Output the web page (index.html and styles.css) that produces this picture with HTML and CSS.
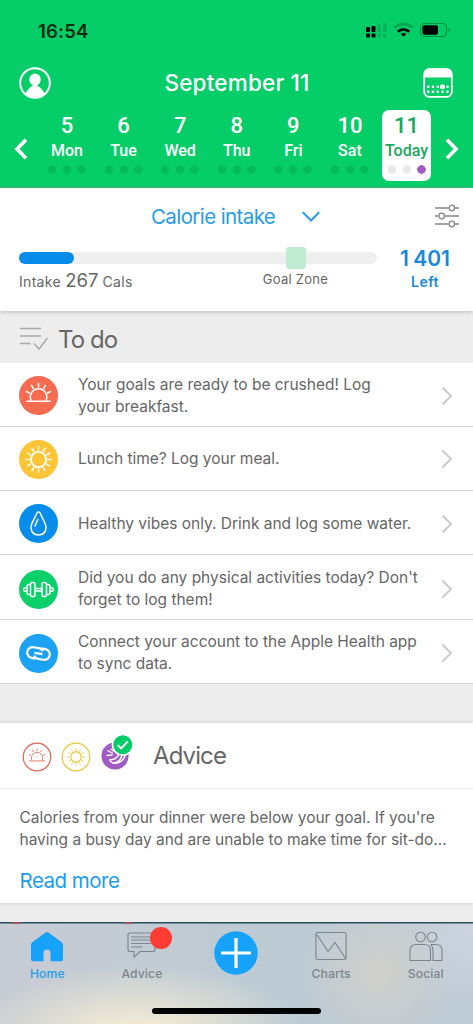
FILE: index.html
```html
<!DOCTYPE html>
<html lang="en">
<head>
<meta charset="utf-8">
<meta name="viewport" content="width=device-width">
<title>Calorie tracker</title>
<link rel="stylesheet" href="styles.css">
</head>
<body>
<svg class="defs" width="0" height="0">
  <defs>
    <symbol id="sunrise" viewBox="0 0 39 39">
      <path d="M8 25.200h23.300M12.400 25a8.200 8.200 0 1 1 14.300 0M19.500 7.300v3.700M12.600 9.300l1.600 3M26.400 9.300l-1.600 3M7.500 15.500l3 1.700M31.500 15.500l-3 1.700"/>
    </symbol>
    <symbol id="sun" viewBox="0 0 39 39">
      <circle cx="19.500" cy="19.500" r="7.600" stroke-width="1.900"/>
      <path d="M19.500 6.800v3.300M19.500 28.900v3.300M6.800 19.500h3.300M28.900 19.500h3.300M13.100 8.500l1.700 2.900M24.200 27.600l1.700 2.900M8.500 13.100l2.900 1.700M27.600 24.200l2.900 1.700M8.500 25.900l2.900-1.700M27.600 14.800l2.900-1.700M13.100 30.500l1.700-2.900M24.200 11.400l1.700-2.900"/>
    </symbol>
    <symbol id="chevron" viewBox="0 0 12 20"><path d="M1.500 1.500L10 10l-8.500 8.500"/></symbol>
  </defs>
</svg>
<div class="screen">
  <header class="header">
    <div class="status">
      <span class="time">16:54</span>
      <svg width="86" height="18" viewBox="0 0 86 18">
        <g fill="#000"><rect x="1" y="5" width="4" height="5" rx="1"/><rect x="6.500" y="4" width="4" height="6" rx="1"/><rect x="1" y="11.500" width="4" height="4" rx="1"/><rect x="6.500" y="11.500" width="4" height="4" rx="1"/></g>
        <g fill="#03b35a"><rect x="12.200" y="2.500" width="3.500" height="7.500" rx="1"/><rect x="18" y="1" width="3.500" height="9" rx="1"/><rect x="12.200" y="11.500" width="3.500" height="4" rx="1"/><rect x="18" y="11.500" width="3.500" height="4" rx="1"/></g>
        <path d="M29.500 5.500q9-7 18 0" fill="none" stroke="#03a552" stroke-width="3"/>
        <path d="M32.800 9.600q5.700-4.500 11.400 0" fill="none" stroke="#000" stroke-width="2.800"/>
        <path d="M38.500 14.800l-2.800-2.800q2.800-2.200 5.600 0z"/>
        <rect x="55.500" y="1.500" width="26" height="13" rx="4" fill="none" stroke="#02903f" stroke-width="1.200"/>
        <rect x="57.500" y="3.200" width="15.500" height="9.600" rx="2"/>
        <path d="M83.500 6v4q1.300-.6 1.300-2t-1.300-2z" fill="#02903f"/>
      </svg>
    </div>
    <div class="title-row">
      <svg width="32" height="32" viewBox="0 0 32 32"><circle cx="16" cy="16" r="14.800" fill="none" stroke="#fff" stroke-width="2"/><path fill="#fff" d="M6 27q3.500-6.500 8-8.600-3.700-2-3.700-6.200a5.700 5.700 0 0 1 11.400 0q0 4.200-3.700 6.200 4.500 2.100 8 8.600-10 7.500-20 0z"/></svg>
      <h1>September 11</h1>
      <svg width="30" height="30" viewBox="0 0 30 30"><rect x="1.200" y="1.200" width="27.600" height="27.600" rx="5" fill="none" stroke="#fff" stroke-width="1.700"/><path d="M1 9.500V6q0-5.500 5.500-5.500h17Q29 .5 29 6v3.500z" fill="#fff"/><g fill="#fff"><circle cx="5.300" cy="18.700" r="1.300"/><circle cx="10" cy="18.700" r="1.300"/><circle cx="14.800" cy="18.700" r="1.300"/><circle cx="19.500" cy="18.700" r="2.500"/><circle cx="24.500" cy="18.700" r="1.300"/><circle cx="5.300" cy="23.800" r="1.300"/><circle cx="10" cy="23.800" r="1.300"/><circle cx="14.800" cy="23.800" r="1.300"/><circle cx="19.500" cy="23.800" r="1.300"/><circle cx="24.500" cy="23.800" r="1.300"/></g></svg>
    </div>
    <nav class="week">
      <svg class="arrow" width="14" height="22" viewBox="0 0 14 22"><path d="M12 1.800L3 11l9 9.200"/></svg>
      <div class="days">
        <div class="day"><b>5</b><span>Mon</span><i></i></div>
        <div class="day"><b>6</b><span>Tue</span><i></i></div>
        <div class="day"><b>7</b><span>Wed</span><i></i></div>
        <div class="day"><b>8</b><span>Thu</span><i></i></div>
        <div class="day"><b>9</b><span>Fri</span><i></i></div>
        <div class="day"><b>10</b><span>Sat</span><i></i></div>
        <div class="day today"><b>11</b><span>Today</span><i></i></div>
      </div>
      <svg class="arrow" width="14" height="22" viewBox="0 0 14 22"><path d="M2 1.800L11 11l-9 9.200"/></svg>
    </nav>
  </header>

  <section class="intake">
    <div class="intake-head">
      <h2>Calorie intake</h2>
      <svg class="down" width="18" height="11" viewBox="0 0 18 11"><path d="M.8 1.200L9 9.500l8.200-8.300"/></svg>
      <svg class="filter" width="24" height="24" viewBox="0 0 24 24"><path d="M0 4h13.500M20 4h4M0 12h3.500M10 12h14M0 20h13.500M20 20h4"/><circle cx="16.800" cy="4" r="2.800"/><circle cx="6.700" cy="12" r="2.800"/><circle cx="16.800" cy="20" r="2.800"/></svg>
    </div>
    <div class="intake-body">
      <div class="meter">
        <div class="bar"><div class="fill"></div><div class="zone"></div></div>
        <div class="labels"><p class="amount">Intake <strong>267</strong> Cals</p><p class="goal">Goal Zone</p></div>
      </div>
      <div class="left"><b>1 401</b><span>Left</span></div>
    </div>
  </section>

  <div class="todo-head">
    <svg width="29" height="24" viewBox="0 0 29 24"><path d="M0 1.500h21M0 9h21M0 16.500h10.500M14 16.500l5 5.500 8.500-11"/></svg>
    <h2>To do</h2>
  </div>
  <ul class="todo">
    <li><span class="disc coral"><svg><use href="#sunrise"/></svg></span><p>Your goals are ready to be crushed! Log<br>your breakfast.</p><svg class="go"><use href="#chevron"/></svg></li>
    <li><span class="disc yellow"><svg><use href="#sun"/></svg></span><p>Lunch time? Log your meal.</p><svg class="go"><use href="#chevron"/></svg></li>
    <li><span class="disc blue"><svg viewBox="0 0 39 39"><path d="M19.500 8q-1.500 0-2.500 3-1.700 3.500-3.500 7.200-1.800 3.800-1.500 6 .8 6.800 7.500 6.800t7.500-6.800q.3-2.200-1.500-6-1.800-3.700-3.500-7.200-1-3-2.500-3zM18.700 15.500l-2.700 6.500"/></svg></span><p>Healthy vibes only. Drink and log some water.</p><svg class="go"><use href="#chevron"/></svg></li>
    <li class="tall"><span class="disc green"><svg viewBox="0 0 39 39"><path d="M16.500 18.500h6M16.500 21h6"/><rect x="11.500" y="12.500" width="4.500" height="14" rx="1.500"/><rect x="23" y="12.500" width="4.500" height="14" rx="1.500"/><path d="M11.500 14.500h-1.500q-2 0-2 2v6q0 2 2 2h1.500M27.500 14.500H29q2 0 2 2v6q0 2-2 2h-1.500M8 17.700H6q-1.300 0-1.300 1.800T6 21.300h2M31 17.700h2q1.300 0 1.300 1.800T33 21.300h-2"/></svg></span><p>Did you do any physical activities today? Don't<br>forget to log them!</p><svg class="go"><use href="#chevron"/></svg></li>
    <li class="low"><span class="disc sky"><svg class="link" viewBox="0 0 39 39"><g transform="rotate(10 19.500 19.500)"><path d="M17.500 25h-4a5.400 5.400 0 0 1 0-10.800h5.500q3.300 0 4.200 2.500M21.500 14h4a5.400 5.400 0 0 1 0 10.800h-5.500q-3.300 0-4.200-2.500M15.500 19.500h8"/></g></svg></span><p>Connect your account to the Apple Health app<br>to sync data.</p><svg class="go"><use href="#chevron"/></svg></li>
  </ul>

  <section class="advice">
    <div class="advice-head">
      <svg class="meal red" viewBox="0 0 30 30"><circle cx="15" cy="15" r="13.800"/><use href="#sunrise" x="1.500" y="1.500" width="27" height="27"/></svg>
      <svg class="meal gold" viewBox="0 0 30 30"><circle cx="15" cy="15" r="13.800"/><use href="#sun" x="1.500" y="1.500" width="27" height="27"/></svg>
      <svg class="dinner" width="34" height="38" viewBox="0 0 34 38"><circle cx="15" cy="22" r="13.600" fill="#a25ac4"/><g fill="none" stroke="#fff" stroke-width="1.400"><path d="M9.500 25.500q7.500 1 10-7M9.500 25.500q2.500 5 8 3.500 6.500-2 8-9M13 29.300q8-1.500 9.500-10M7.500 16.500l5.500 3M10.500 15l4 2.500M6.500 21.500l6-.5"/></g><circle cx="22.800" cy="10.700" r="10.300" fill="#00cc68" stroke="#fff" stroke-width="1.600"/><path d="M17.500 11l3.600 3.500 6.700-7" fill="none" stroke="#fff" stroke-width="1.900"/></svg>
      <h2>Advice</h2>
    </div>
    <div class="advice-body">
      <p>Calories from your dinner were below your goal. If you're<br>having a busy day and are unable to make time for sit-do...</p>
      <a>Read more</a>
    </div>
  </section>

  <nav class="tabs">
    <div class="tab active"><svg width="34" height="34" viewBox="0 0 34 34"><path fill="#16a1fa" d="M17 2q.8 0 1.500.6L32 12.500q1 .8 1 2v14.800q0 2-2 2H20.500v-8.300q0-3.500-3.500-3.500T13.500 23v8.300H3q-2 0-2-2V14.500q0-1.200 1-2L15.500 2.600Q16.200 2 17 2z"/></svg><span>Home</span></div>
    <div class="tab"><svg class="line" width="34" height="34" viewBox="0 0 34 34"><path d="M5 3h23q2 0 2 2v14.500q0 2-2 2H15l-6 5.700v-5.700H5q-2 0-2-2V5q0-2 2-2zM6 7h20.500M6 10h20.500M6 13.500h20.500M6 17h11.500"/></svg><em class="badge"></em><span>Advice</span></div>
    <div class="tab add"><svg width="44" height="44" viewBox="0 0 44 44"><circle cx="22" cy="22" r="21.700" fill="#16a1fa"/><path d="M22 7v30M7 22h30" stroke="#fff" stroke-width="3.200"/></svg></div>
    <div class="tab"><svg class="line" width="34" height="34" viewBox="0 0 34 34"><rect x="1.900" y="2.500" width="30.200" height="27" rx="1.500"/><path d="M2.500 4l11.500 17.500 7-9L32 29"/></svg><span>Charts</span></div>
    <div class="tab"><svg class="line" width="34" height="34" viewBox="0 0 34 34"><circle cx="11.500" cy="7" r="4.800"/><circle cx="23" cy="7" r="4.800"/><path d="M1 30.500V21q0-6.500 6-6.500h8.500q6 0 6 6.500v9.500zM22 14.500h5q6 0 6 6.500v9.500h-9V21q0-4-2-6.500z"/></svg><span>Social</span></div>
    <div class="home-bar"></div>
  </nav>
</div>
</body>
</html>
```
FILE: styles.css
```css
* { box-sizing: border-box; }
body { margin: 0; font-family: Inter, "Liberation Sans", sans-serif; color: #666; }
h1, h2, p, ul { margin: 0; padding: 0; }
.defs { position: absolute; }
.screen { width: 473px; height: 1024px; background: #ededed; overflow: hidden; display: flex; flex-direction: column; }
svg { display: block; flex: none; }

.header { height: 188px; flex: none; background: linear-gradient(#05ce68 185px, #03bb5d); color: #fff; display: flex; flex-direction: column; }
.status { display: flex; justify-content: space-between; padding: 22px 22px 0 38px; height: 62px; }
.time { color: #062c12; font-size: 18.500px; font-weight: 600; line-height: 18px; letter-spacing: .2px; }
.title-row { height: 43px; display: flex; justify-content: space-between; align-items: center; padding: 0 20px 0 19px; }
.title-row svg { margin-top: -1px; }
h1 { font-size: 22.500px; font-weight: 550; line-height: 30px; letter-spacing: .2px; padding-bottom: 2px; }
.week { display: flex; justify-content: space-between; padding: 5px 14px 0; }
.arrow { margin-top: 28px; fill: none; stroke: #fff; stroke-width: 3.6; }
.days { display: flex; width: 388.600px; margin-left: .5px; }
.day { width: 49px; height: 71px; margin-right: 7.600px; flex: none; border-radius: 7px; display: flex; flex-direction: column; align-items: center; font-family: Roboto, sans-serif; }
.day b { font-size: 22px; line-height: 24px; padding-top: 4px; height: 28px; font-weight: 500; }
.day span { font-size: 16px; line-height: 20px; height: 26px; padding-top: 3px; font-weight: 500; }
.day i { margin-top: 1px; width: 40px; height: 9px; background: radial-gradient(circle at 5px 4.500px, #03bb5d 4px, transparent 4.500px), radial-gradient(circle at 20px 4.500px, #03bb5d 4px, transparent 4.500px), radial-gradient(circle at 34.500px 4.500px, #03bb5d 4px, transparent 4.500px); }
.today { background: #fff; color: #18a860; margin-right: 0; }
.today i { background: radial-gradient(circle at 5px 4.500px, #e9e9e9 4px, transparent 4.500px), radial-gradient(circle at 20px 4.500px, #e9e9e9 4px, transparent 4.500px), radial-gradient(circle at 34.500px 4.500px, #a25ac4 4px, transparent 4.500px); }

.intake { height: 123px; flex: none; background: #fff; box-shadow: 0 1px 4px #bbb; z-index: 1; }
.intake-head { height: 58px; display: flex; align-items: center; padding: 0 14px 0 151px; }
.intake-head h2 { font-size: 20.500px; font-weight: 400; color: #259de8; width: 151px; letter-spacing: -.6px; white-space: nowrap; padding-bottom: 2px; }
.down { fill: none; stroke: #259de8; stroke-width: 2; margin-top: -2px; }
.filter { margin: -2px 0 0 auto; fill: none; stroke: #858585; stroke-width: 1.300; }
.intake-body { display: flex; padding-left: 19px; }
.meter { width: 358px; padding-top: 6px; }
.bar { height: 12px; border-radius: 6px; background: #efefef; display: flex; align-items: center; }
.fill { width: 55px; height: 12px; border-radius: 6px; background: #078de9; }
.zone { width: 20px; height: 22px; border-radius: 3px; background: #c0ebd3; margin-left: 212px; }
.labels { display: flex; justify-content: space-between; width: 309px; padding-top: 5px; }
.amount { font-size: 14px; line-height: 22px; letter-spacing: .3px; }
.amount strong { font-size: 18.500px; font-weight: 400; letter-spacing: 0; }
.goal { font-size: 13px; line-height: 21px; letter-spacing: .25px; }
.left { width: 96px; display: flex; flex-direction: column; align-items: center; color: #168add; }
.left b { font-size: 21px; line-height: 26px; font-weight: 600; word-spacing: -1px; }
.left span { font-size: 14px; line-height: 20px; font-weight: 600; letter-spacing: .5px; }

.todo-head { height: 52px; flex: none; display: flex; align-items: center; padding: 4px 0 0 20px; gap: 9px; }
.todo-head svg { fill: none; stroke: #aaa; stroke-width: 1.500; }
h2 { font-weight: 400; }
.todo-head h2, .advice h2 { font-size: 24px; letter-spacing: -.9px; }
.todo { list-style: none; background: #fff; flex: none; }
.todo li { height: 64px; border-bottom: 1px solid #d5d5d5; display: flex; align-items: center; padding: 2px 20px 0 19px; }
.todo li:nth-child(2) { padding-top: 1px; }
.todo li.tall { height: 65px; padding-top: 4px; }
.todo li.low { padding-top: 3px; }
.todo p { font-size: 15.500px; line-height: 22px; margin-left: 20px; letter-spacing: -.015px; white-space: nowrap; }
.disc { width: 39px; height: 39px; border-radius: 50%; flex: none; }
.disc svg { width: 39px; height: 39px; fill: none; stroke: #fff; stroke-width: 1.500; stroke-linecap: round; }
.disc .link { stroke-width: 2.200; stroke-linecap: butt; }
.coral { background: #f76b50; }
.yellow { background: #fdc436; }
.blue { background: #078de9; }
.green { background: #0bcf68; }
.sky { background: #1ba2f2; }
.go { width: 12px; height: 20px; margin-left: auto; fill: none; stroke: #c8c8c8; stroke-width: 1.800; }

.advice { margin-top: 39px; height: 180px; flex: none; background: #fff; box-shadow: 0 0 4px #c4c4c4; }
.advice-head { height: 66px; border-bottom: 1px solid #e8e8e8; display: flex; align-items: center; padding-left: 22px; }
.meal { width: 30px; height: 30px; margin: 2px 9px 0 0; fill: none; stroke-width: 1.200; }
.red { stroke: #df6655; }
.gold { stroke: #ebc83a; }
.dinner { margin-top: -5px; }
.advice h2 { margin-left: 19px; }
.advice-body { padding: 18px 19.500px; }
.advice-body p { font-size: 15.500px; line-height: 22px; letter-spacing: -.035px; white-space: nowrap; }
.advice-body a { display: block; font-size: 20.500px; letter-spacing: -.5px; line-height: 28px; color: #1a9df0; margin-top: 16px; }

.tabs { position: relative; margin-top: 19px; height: 102px; flex: none; display: grid; grid-template-columns: repeat(5, 94.600px); padding-top: 8px; background: linear-gradient(#a04850, #a04850) 12px 0 / 9px 1.500px no-repeat, linear-gradient(#a04850, #a04850) 124px 0 / 9px 1.500px no-repeat, linear-gradient(#264f61, #264f61) 0 0 / 100% 1.500px no-repeat, radial-gradient(ellipse 170px 75px at 29% 115%, #eee8d5 25%, rgba(238, 232, 213, 0)), radial-gradient(circle 80px at 80% 50%, #cfcfcc 10%, rgba(207, 207, 204, 0)), radial-gradient(circle 90px at 100% 0, #cdd4df, rgba(205, 212, 223, 0)), linear-gradient(100deg, #c8cbd4, #bccbd4 60%, #bfcbd5); }
.tab { display: flex; flex-direction: column; align-items: center; font-size: 12.200px; line-height: 16px; color: #7c858d; position: relative; letter-spacing: .1px; font-weight: 500; }
.tab span { margin-top: 2px; }
.active { color: #259ee9; }
.line { fill: none; stroke: #7c858d; stroke-width: 1.100; }
.badge { position: absolute; left: 55px; top: -3px; width: 22px; height: 22px; border-radius: 50%; background: #ff3c32; }
.add svg { margin-top: 1px; }
.home-bar { position: absolute; left: 152px; top: 86px; width: 169px; height: 6px; border-radius: 3px; background: #000; }
```
